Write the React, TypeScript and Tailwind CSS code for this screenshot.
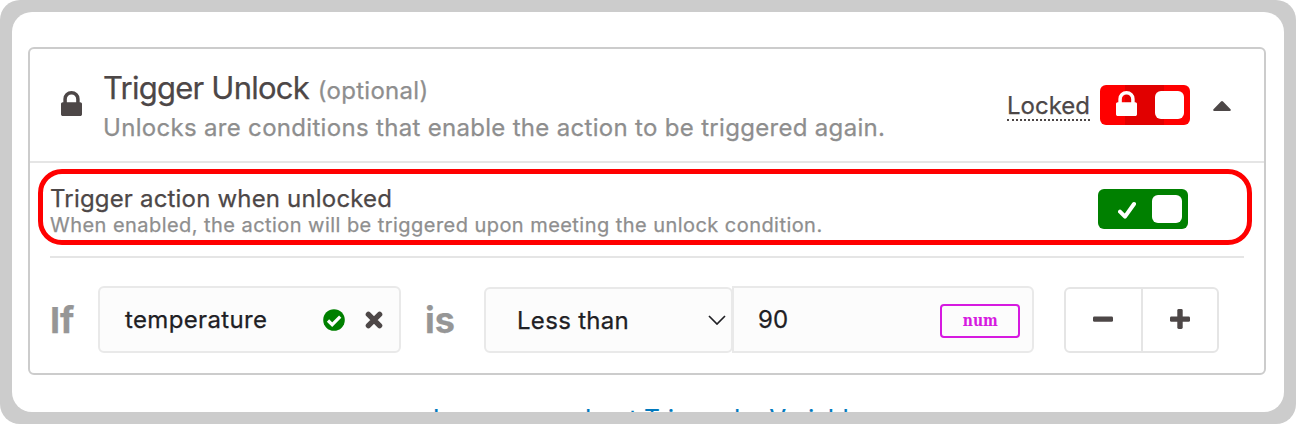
import { ReactNode } from "react";

function LockIcon({ className }: { className: string }) {
  return (
    <svg viewBox="0 0 1152 1408" preserveAspectRatio="none" className={className} fill="currentColor">
      <path d="M320 640h512V448q0-106-75-181t-181-75-181 75-75 181v192zm832 96v576q0 40-28 68t-68 28H96q-40 0-68-28t-28-68V736q0-40 28-68t68-28h32V448q0-184 132-316T576 0t316 132 132 316v192h32q40 0 68 28t28 68z" />
    </svg>
  );
}

function Toggle({ color, knob, children }: { color: string; knob: string; children: ReactNode }) {
  return (
    <div className={`flex h-10 w-[90px] shrink-0 rounded-[6px] ${color}`}>
      {children}
      <span className={`mt-1.5 h-7 rounded-[6px] bg-white ${knob}`} />
    </div>
  );
}

export default function App() {
  return (
    <div className="h-[424px] w-[1296px] overflow-hidden rounded-[20px] bg-[#ccc] p-3 font-['Inter',sans-serif] text-[#4d4747] [-webkit-text-stroke:0.25px_currentColor]">
      <div className="h-[400px] overflow-hidden rounded-[20px] bg-white px-4 pt-[35px]">
        <section className="h-[328px] w-[1238px] rounded-[6px] border-2 border-[#ccc]">
          <header className="flex h-[114px] items-start border-b-2 border-[#e5e5e5]">
            <LockIcon className="ml-[31px] mt-[42px] h-[25px] w-[21px] shrink-0" />
            <div className="ml-[21px] mt-[20px] w-[861px] whitespace-nowrap">
              <h2 className="h-[38px] text-[31px] leading-[38px]">
                <span className="tracking-[-0.76px]">Trigger Unlock</span>{" "}
                <span className="text-[24px] tracking-[0.3px] text-[#8e8e8e]">(optional)</span>
              </h2>
              <p className="h-[38px] text-[24px] leading-[42px] tracking-[0.31px] text-[#8e8e8e]">
                Unlocks are conditions that enable the action to be triggered again.
              </p>
            </div>
            <span className="ml-[43px] mt-[41px] h-[31px] w-[83px] whitespace-nowrap border-b-2 border-dotted border-[#4d4747] text-[24px] leading-[32px]">
              Locked
            </span>
            <div className="ml-[10px] mt-9">
              <Toggle color="bg-[linear-gradient(90deg,#f00_0_25px,#e10000_25px_64px,#f00_64px)]" knob="ml-[18px] w-[29px]">
                <LockIcon className="ml-4 mt-1.5 h-[25px] w-[21px] text-white" />
              </Toggle>
            </div>
            <svg viewBox="0 0 18 10" className="ml-[23px] mt-[52px] h-[10px] w-[18px]" fill="currentColor">
              <path d="M1 10Q-.5 9.3.5 8.3L8 .6Q9 -.4 10 .6L17.5 8.3Q18.5 9.3 17 10Z" />
            </svg>
          </header>

          <div className="ml-2 mt-[6px] flex h-[76px] w-[1214px] rounded-[24px] border-[5px] border-[#f00]">
            <div className="ml-[7px] mt-[10px] w-[1048px] whitespace-nowrap">
              <h3 className="h-[29px] text-[24px] leading-[30px] tracking-[0.18px]">Trigger action when unlocked</h3>
              <p className="h-[24px] text-[20px] leading-[24px] tracking-[0.45px] text-[#8e8e8e]">
                When enabled, the action will be triggered upon meeting the unlock condition.
              </p>
            </div>
            <div className="mt-[15px]">
              <Toggle color="bg-[#008000]" knob="ml-4 w-[30px]">
                <svg viewBox="0 0 18 18" className="ml-5 mt-[12px] h-[18px] w-[18px]">
                  <path d="M2 10.7 7 15.7 16 3" fill="none" stroke="white" strokeWidth="4" strokeLinecap="round" strokeLinejoin="round" />
                </svg>
              </Toggle>
            </div>
          </div>

          <div className="ml-5 mt-[11px] w-[1194px] border-t-2 border-[#e5e5e5]" />

          <div className="ml-5 mt-7 flex h-[67px] items-end text-[24px] text-[#202024]">
            <span className="w-12 self-center text-[36px] font-bold text-[#969696]">If</span>
            <div className="flex h-[67px] w-[303px] items-center rounded-[6px] border-2 border-[#e9e9e9] bg-[#fcfcfc] pl-[25px]">
              <span className="w-[197.5px] tracking-[0.35px]">temperature</span>
              <svg viewBox="0 0 22 22" className="h-[22px] w-[22px]">
                <circle cx="11" cy="11" r="10.8" fill="#008000" />
                <path d="m5 11.5 4.2 4.2 8-8" fill="none" stroke="white" strokeWidth="3.2" />
              </svg>
              <svg viewBox="0 0 18 18" className="ml-[20px] h-[18px] w-[18px]">
                <path d="M3.4 3.4 14.6 14.6M14.6 3.4 3.4 14.6" stroke="#4d4747" strokeWidth="5.4" strokeLinecap="round" />
              </svg>
            </div>
            <span className="ml-6 w-[59px] self-center text-[36px] font-bold text-[#969696]">is</span>
            <div className="flex h-[66px] w-[249px] items-center rounded-[6px] border-2 border-[#e9e9e9] bg-[#fcfcfc] pl-[31px]">
              <span className="w-[191px] pt-px tracking-[0.3px]">Less than</span>
              <svg viewBox="0 0 18 10" className="h-[10px] w-[18px]">
                <path d="m1 1 8 8 8-8" fill="none" stroke="#202024" strokeWidth="1.7" />
              </svg>
            </div>
            <div className="-ml-px flex h-[67px] w-[302px] items-center rounded-r-[6px] border-2 border-[#e9e9e9] bg-[#fcfcfc] pl-6">
              <span className="w-[182px]">90</span>
              <span className="mt-0.5 flex h-[34px] w-20 items-center justify-center rounded-[4px] border-2 border-[#d61ae0] font-['DejaVu_Serif',serif] text-[17px] font-bold leading-none text-[#d61ae0] [-webkit-text-stroke:0]">
                <span className="scale-x-[0.82]">num</span>
              </span>
            </div>
            <div className="ml-[30px] flex h-[66px] w-[155px] rounded-[6px] border-2 border-[#e5e5e5] text-[#4d4747]">
              <button className="flex w-[77px] items-center justify-center border-r-2 border-[#e5e5e5] pb-[3px] pr-px">
                <svg viewBox="0 0 20 20" className="h-5 w-5" fill="currentColor">
                  <rect y="7.4" width="20" height="5.4" rx="1.4" />
                </svg>
              </button>
              <button className="flex flex-1 items-center justify-center pb-[3px] pr-px">
                <svg viewBox="0 0 20 20" className="h-5 w-5" fill="currentColor">
                  <rect y="7.4" width="20" height="5.4" rx="1.4" />
                  <rect x="7.3" width="5.4" height="20" rx="1.4" />
                </svg>
              </button>
            </div>
          </div>
        </section>
        <a className="mt-[28px] block whitespace-nowrap text-center text-[24px] leading-[32px] tracking-[0.2px] text-[#0079bd]">
          Learn more about Trigger by Variable
        </a>
      </div>
    </div>
  );
}
